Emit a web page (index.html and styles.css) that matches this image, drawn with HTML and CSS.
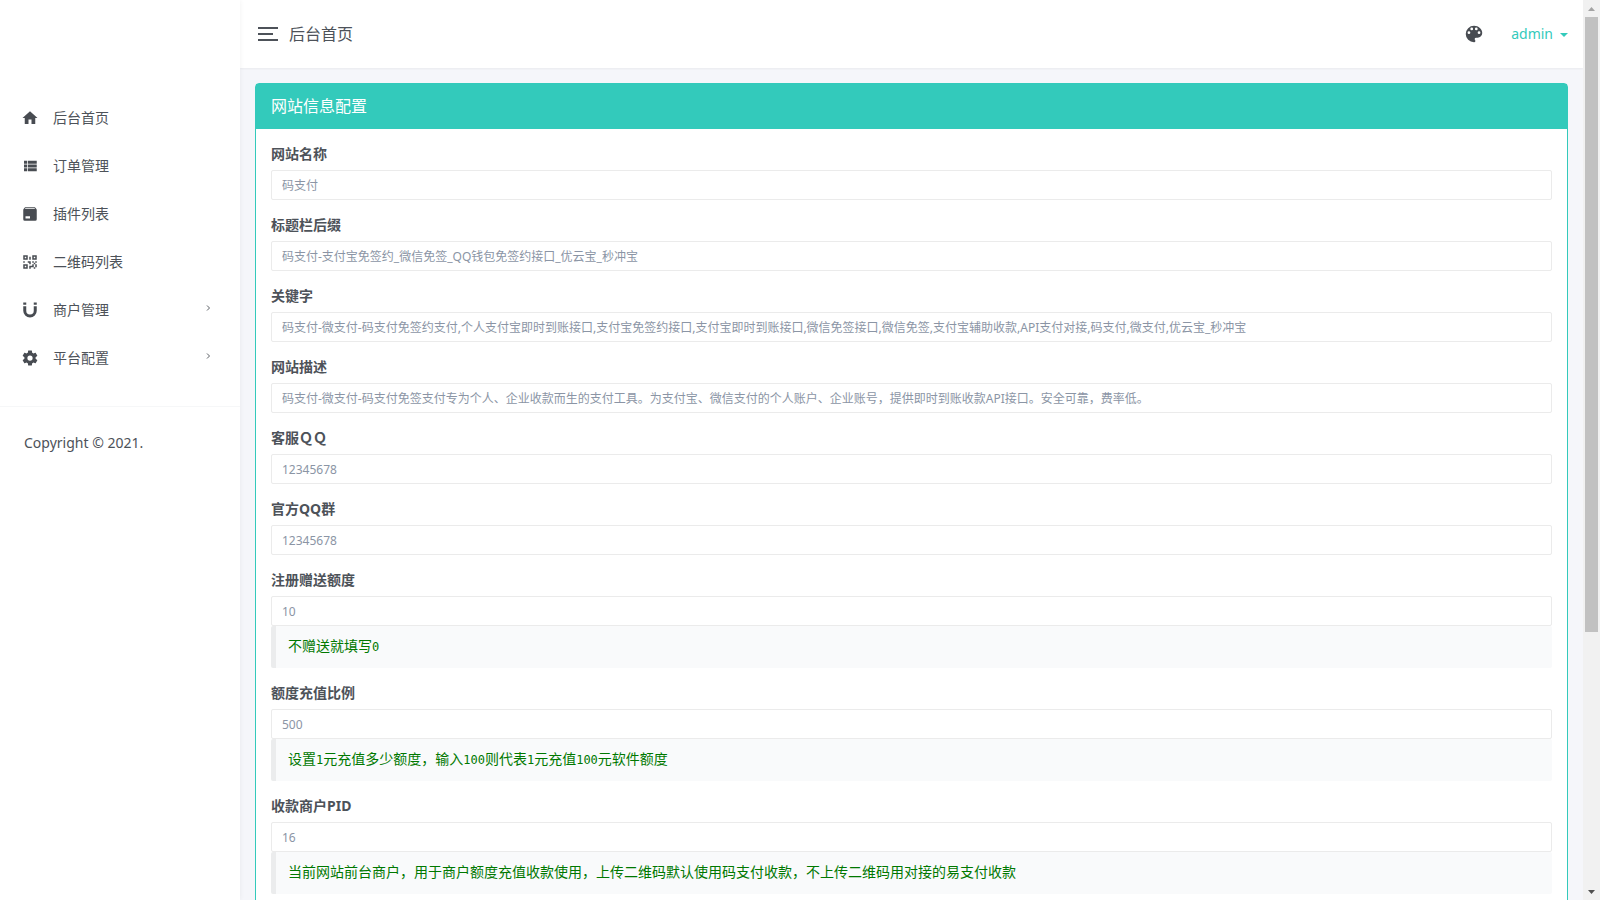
FILE: index.html
```html
<!DOCTYPE html>
<html lang="zh-CN">
<head>
<meta charset="utf-8">
<title>后台首页</title>
<link rel="stylesheet" href="styles.css">
</head>
<body>
<div class="app">
  <aside class="sidebar">
    <nav class="menu">
      <a class="menu-item" href="#"><svg class="icon" viewBox="0 0 24 24"><path d="M10,20V14H14V20H19V12H22L12,3L2,12H5V20H10Z"/></svg><span>后台首页</span></a>
      <a class="menu-item" href="#"><svg class="icon" viewBox="0 0 24 24"><path d="M9,5V9H21V5M9,19H21V15H9M9,14H21V10H9M4,9H8V5H4M4,19H8V15H4M4,14H8V10H4V14Z"/></svg><span>订单管理</span></a>
      <a class="menu-item" href="#"><svg class="icon" viewBox="0 0 24 24"><path d="M5.12,5H18.87L17.93,4H5.93L5.12,5M20.54,5.23C20.83,5.57 21,6 21,6.5V19A2,2 0 0,1 19,21H5A2,2 0 0,1 3,19V6.5C3,6 3.17,5.57 3.46,5.23L4.84,3.55C5.12,3.21 5.53,3 6,3H18C18.47,3 18.88,3.21 19.15,3.55L20.54,5.23M6,18H12V15H6V18Z"/></svg><span>插件列表</span></a>
      <a class="menu-item" href="#"><svg class="icon" viewBox="0 0 24 24"><path d="M3,11H5V13H3V11M11,5H13V9H11V5M9,11H13V15H11V13H9V11M15,11H17V13H19V11H21V13H19V15H21V19H19V21H17V19H13V21H11V17H15V15H17V13H15V11M19,19V15H17V19H19M15,3H21V9H15V3M17,5V7H19V5H17M3,3H9V9H3V3M5,5V7H7V5H5M3,15H9V21H3V15M5,17V19H7V17H5Z"/></svg><span>二维码列表</span></a>
      <a class="menu-item" href="#"><svg class="icon" viewBox="0 0 24 24"><path d="M3,7V13A9,9 0 0,0 12,22A9,9 0 0,0 21,13V7H17V13A5,5 0 0,1 12,18A5,5 0 0,1 7,13V7M17,5H21V2H17M3,5H7V2H3"/></svg><span>商户管理</span><svg class="chevron" viewBox="0 0 8 8"><path d="M3 1.500L5.500 4L3 6.500"/></svg></a>
      <a class="menu-item" href="#"><svg class="icon" viewBox="0 0 24 24"><path d="M12,15.5A3.5,3.5 0 0,1 8.5,12A3.5,3.5 0 0,1 12,8.5A3.5,3.5 0 0,1 15.5,12A3.5,3.5 0 0,1 12,15.5M19.43,12.97C19.47,12.65 19.5,12.33 19.5,12C19.5,11.67 19.47,11.34 19.43,11L21.54,9.37C21.73,9.22 21.78,8.95 21.66,8.73L19.66,5.27C19.54,5.05 19.27,4.96 19.05,5.05L16.56,6.05C16.04,5.66 15.5,5.32 14.87,5.07L14.5,2.42C14.46,2.18 14.25,2 14,2H10C9.75,2 9.54,2.18 9.5,2.42L9.13,5.07C8.5,5.32 7.96,5.66 7.44,6.05L4.95,5.05C4.73,4.96 4.46,5.05 4.34,5.27L2.34,8.73C2.21,8.95 2.27,9.22 2.46,9.37L4.57,11C4.53,11.34 4.5,11.67 4.5,12C4.5,12.33 4.53,12.65 4.57,12.97L2.46,14.63C2.27,14.78 2.21,15.05 2.34,15.27L4.34,18.73C4.46,18.95 4.73,19.03 4.95,18.95L7.44,17.94C7.96,18.34 8.5,18.68 9.13,18.93L9.5,21.58C9.54,21.82 9.75,22 10,22H14C14.25,22 14.46,21.82 14.5,21.58L14.87,18.93C15.5,18.67 16.04,18.34 16.56,17.94L19.05,18.95C19.27,19.03 19.54,18.95 19.66,18.73L21.66,15.27C21.78,15.05 21.73,14.78 21.54,14.63L19.43,12.97Z"/></svg><span>平台配置</span><svg class="chevron" viewBox="0 0 8 8"><path d="M3 1.500L5.500 4L3 6.500"/></svg></a>
    </nav>
    <p class="copyright">Copyright © 2021.</p>
  </aside>
  <div class="page">
    <header class="topbar">
      <button class="toggler" type="button" aria-label="菜单"><span class="bar"></span><span class="bar bar-short"></span><span class="bar"></span></button>
      <span class="page-title">后台首页</span>
      <button class="palette" type="button" aria-label="主题"><svg viewBox="0 0 24 24"><path d="M17.5,12A1.5,1.5 0 0,1 16,10.5A1.5,1.5 0 0,1 17.5,9A1.5,1.5 0 0,1 19,10.5A1.5,1.5 0 0,1 17.5,12M14.5,8A1.5,1.5 0 0,1 13,6.5A1.5,1.5 0 0,1 14.5,5A1.5,1.5 0 0,1 16,6.5A1.5,1.5 0 0,1 14.5,8M9.5,8A1.5,1.5 0 0,1 8,6.5A1.5,1.5 0 0,1 9.5,5A1.5,1.5 0 0,1 11,6.5A1.5,1.5 0 0,1 9.5,8M6.5,12A1.5,1.5 0 0,1 5,10.5A1.5,1.5 0 0,1 6.5,9A1.5,1.5 0 0,1 8,10.5A1.5,1.5 0 0,1 6.5,12M12,3A9,9 0 0,0 3,12A9,9 0 0,0 12,21A1.5,1.5 0 0,0 13.5,19.5C13.5,19.11 13.35,18.76 13.11,18.5C12.88,18.23 12.73,17.88 12.73,17.5A1.5,1.5 0 0,1 14.23,16H16A5,5 0 0,0 21,11C21,6.58 16.97,3 12,3Z"/></svg></button>
      <a class="user" href="#"><span>admin</span><span class="caret"></span></a>
    </header>
    <main class="content">
      <section class="card">
        <h1 class="card-header">网站信息配置</h1>
        <form class="card-body">
          <div class="group"><label for="f1">网站名称</label><input id="f1" type="text" value="码支付"></div>
          <div class="group"><label for="f2">标题栏后缀</label><input id="f2" type="text" value="码支付-支付宝免签约_微信免签_QQ钱包免签约接口_优云宝_秒冲宝"></div>
          <div class="group"><label for="f3">关键字</label><input id="f3" type="text" value="码支付-微支付-码支付免签约支付,个人支付宝即时到账接口,支付宝免签约接口,支付宝即时到账接口,微信免签接口,微信免签,支付宝辅助收款,API支付对接,码支付,微支付,优云宝_秒冲宝"></div>
          <div class="group"><label for="f4">网站描述</label><input id="f4" type="text" value="码支付-微支付-码支付免签支付专为个人、企业收款而生的支付工具。为支付宝、微信支付的个人账户、企业账号，提供即时到账收款API接口。安全可靠，费率低。"></div>
          <div class="group"><label for="f5">客服ＱＱ</label><input id="f5" type="text" value="12345678"></div>
          <div class="group"><label for="f6">官方QQ群</label><input id="f6" type="text" value="12345678"></div>
          <div class="group"><label for="f7">注册赠送额度</label><input id="f7" type="text" value="10"><pre class="hint">不赠送就填写<span class="num">0</span></pre></div>
          <div class="group"><label for="f8">额度充值比例</label><input id="f8" type="text" value="500"><pre class="hint">设置<span class="num">1</span>元充值多少额度，输入<span class="num">100</span>则代表<span class="num">1</span>元充值<span class="num">100</span>元软件额度</pre></div>
          <div class="group"><label for="f9">收款商户PID</label><input id="f9" type="text" value="16"><pre class="hint">当前网站前台商户，用于商户额度充值收款使用，上传二维码默认使用码支付收款，不上传二维码用对接的易支付收款</pre></div>
        </form>
      </section>
    </main>
  </div>
  <div class="scrollbar" aria-hidden="true">
    <svg class="arrow arrow-up" viewBox="0 0 17 17"><path d="M5 11L8.500 7L12 11Z"/></svg>
    <div class="track"><div class="thumb"></div></div>
    <svg class="arrow arrow-down" viewBox="0 0 17 17"><path d="M5 7L8.500 11L12 7Z"/></svg>
  </div>
</div>
</body>
</html>
```

FILE: styles.css
```css
*, *::before, *::after { box-sizing: border-box; }

body {
  margin: 0;
  color: #4d5259;
  background: #f5f6fa;
  font: 14px/21px "Noto Sans", "Noto Sans CJK SC", sans-serif;
}

a { color: inherit; text-decoration: none; }

button {
  padding: 0;
  border: 0;
  background: none;
  color: inherit;
}

.app {
  display: flex;
  height: 100vh;
  overflow: hidden;
}

/* Sidebar */
.sidebar {
  flex: 0 0 240px;
  padding-top: 94px;
  background: #fff;
  box-shadow: 0 0 5px rgba(0, 0, 0, 0.06);
  z-index: 1;
}

.menu {
  padding-bottom: 24px;
  border-bottom: 1px solid #f6f7f8;
}

.menu-item {
  display: flex;
  align-items: center;
  height: 48px;
  padding: 0 28px 0 21px;
}

.menu-item span { padding-bottom: 2px; }

.icon {
  width: 18px;
  height: 18px;
  margin-right: 14px;
  fill: #484c52;
}

.chevron {
  width: 8px;
  height: 8px;
  margin: 0 0 4px auto;
  fill: none;
  stroke: #5c6066;
}

.copyright {
  margin: 0;
  padding: 25px 24px;
}

/* Page */
.page {
  display: flex;
  flex: 1;
  flex-direction: column;
  min-width: 0;
}

.topbar {
  display: flex;
  flex: none;
  align-items: center;
  height: 68px;
  padding: 0 15px 0 18px;
  background: #fff;
  box-shadow: 0 1px 2px rgba(0, 0, 0, 0.05);
}

.toggler {
  display: flex;
  flex-direction: column;
  gap: 4px;
  width: 20px;
}

.bar {
  width: 20px;
  height: 2px;
  background: #4d5259;
}

.bar-short { width: 15px; }

.page-title {
  margin-left: 11px;
  font-size: 16px;
}

.palette {
  display: flex;
  margin: 0 26px 0 auto;
}

.palette svg {
  width: 22px;
  height: 22px;
  fill: #484c52;
}

.user {
  display: flex;
  align-items: center;
  padding-bottom: 2px;
  color: #33cabb;
}

.caret {
  margin: 4px 0 0 7px;
  border: 4px solid transparent;
  border-top-color: currentColor;
  border-bottom: 0;
}

.content {
  flex: 1;
  min-height: 0;
  padding: 15px;
}

.card {
  border: 1px solid #33cabb;
  border-radius: 4px;
  background: #fff;
}

.card-header {
  margin: 0;
  padding: 12px 15px;
  background: #33cabb;
  color: #fff;
  font-size: 16px;
  font-weight: 400;
  line-height: 21px;
}

.card-body { padding: 15px; }

.group { margin-bottom: 15px; }

.group label {
  display: block;
  margin-bottom: 7px;
  font-weight: 700;
  line-height: 19px;
}

.group input {
  display: block;
  width: 100%;
  height: 30px;
  padding: 0 10px;
  border: 1px solid #ebebeb;
  border-radius: 2px;
  background: #fff;
  color: #8b95a5;
  font: inherit;
  font-size: 12px;
}

.hint {
  margin: 0;
  padding: 9px 12px 13px;
  border-left: 5px solid #ebeced;
  border-radius: 2px;
  background: #f9fafb;
  color: #007800;
  font: 14px/20px "Noto Sans CJK SC", sans-serif;
}

.num {
  font: 12px/12px "DejaVu Sans Mono", monospace;
}

/* Scrollbar */
.scrollbar {
  display: flex;
  flex: 0 0 17px;
  flex-direction: column;
  background: #f1f1f1;
}

.arrow { height: 17px; }
.arrow-up { fill: #a3a3a3; }
.arrow-down { fill: #505050; }

.track {
  flex: 1;
  padding: 0 2px;
}

.thumb {
  height: 71%;
  background: #c1c1c1;
}
```
